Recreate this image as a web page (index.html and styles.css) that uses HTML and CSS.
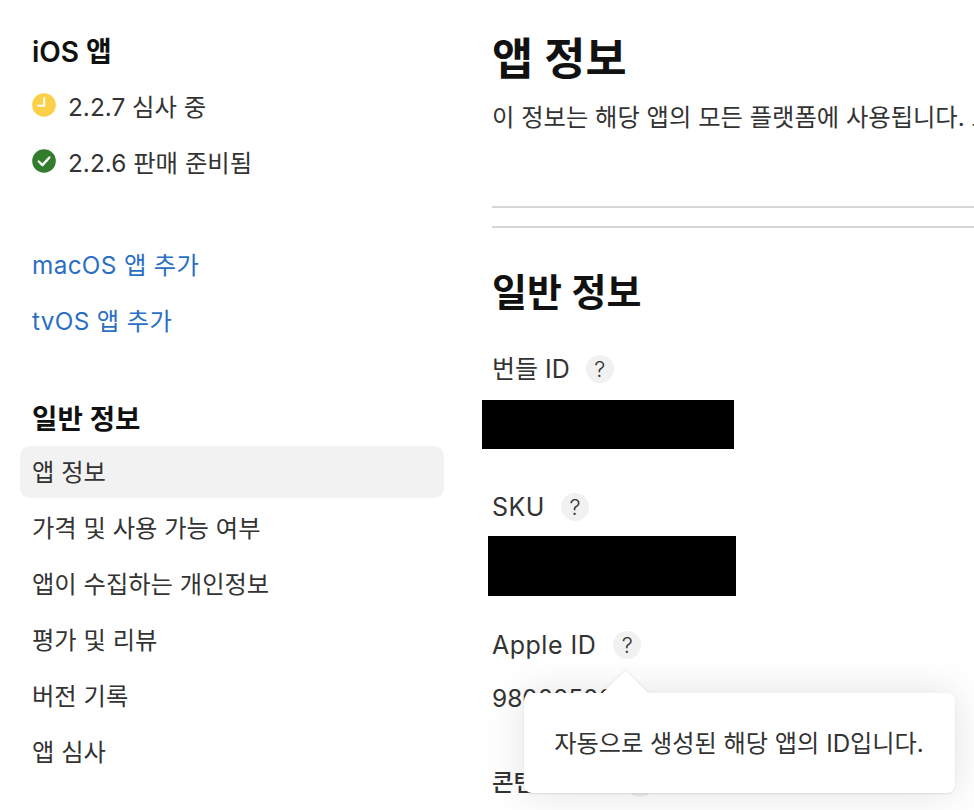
FILE: index.html
```html
<!DOCTYPE html>
<html lang="ko">
<head>
    <meta charset="UTF-8">
    <meta name="viewport" content="width=device-width, initial-scale=1.0">
    <title>앱 정보</title>
    <link rel="stylesheet" href="styles.css">
</head>
<body>

    <div class="page">
        <aside class="sidebar">
            <h3 class="side-title">iOS 앱</h3>
            <div class="status-row">
                <svg class="status-icon" viewBox="0 0 24 24" width="24" height="24">
                    <circle cx="12" cy="12" r="11.8" fill="#fbcf47"/>
                    <path d="M12.2 4.3v8.5H5.3" fill="none" stroke="#fff" stroke-width="2"/>
                </svg>
                <span>2.2.7 심사 중</span>
            </div>
            <div class="status-row">
                <svg class="status-icon" viewBox="0 0 24 24" width="24" height="24">
                    <circle cx="12" cy="12" r="11.8" fill="#317c2d"/>
                    <path d="M6.8 12.5l3.6 3.6 7-7.6" fill="none" stroke="#fff" stroke-width="2.4" stroke-linecap="round" stroke-linejoin="round"/>
                </svg>
                <span>2.2.6 판매 준비됨</span>
            </div>

            <div class="add-links">
                <a class="add-link" href="#">macOS 앱 추가</a>
                <a class="add-link" href="#">tvOS 앱 추가</a>
            </div>

            <h3 class="side-title side-title-general">일반 정보</h3>
            <nav class="side-nav">
                <a class="nav-item active" href="#">앱 정보</a>
                <a class="nav-item" href="#">가격 및 사용 가능 여부</a>
                <a class="nav-item" href="#">앱이 수집하는 개인정보</a>
                <a class="nav-item" href="#">평가 및 리뷰</a>
                <a class="nav-item" href="#">버전 기록</a>
                <a class="nav-item" href="#">앱 심사</a>
            </nav>
        </aside>

        <main class="content">
            <h1 class="page-title">앱 정보</h1>
            <p class="page-desc">이 정보는 해당 앱의 모든 플랫폼에 사용됩니다. 모든 변경 사항은 다음 앱 버전 출시에 적용됩니다.</p>
            <hr class="rule rule-first">
            <hr class="rule">

            <h2 class="section-title">일반 정보</h2>

            <div class="field-label label-bundle">번들 ID <span class="help">?</span></div>
            <div class="redact redact-bundle"></div>

            <div class="field-label label-sku">SKU <span class="help">?</span></div>
            <div class="redact redact-sku"></div>

            <div class="field-label label-apple">Apple ID <span class="help">?</span></div>
            <div class="field-value">9800250000</div>

            <div class="field-label label-rights">콘텐츠 권한 <span class="help">?</span></div>

            <div class="tooltip">
                <span class="tooltip-arrow"></span>
                자동으로 생성된 해당 앱의 ID입니다.
            </div>
        </main>
    </div>

</body>
</html>
```

FILE: styles.css
```css
html, body {
    margin: 0;
    padding: 0;
    height: 810px;
    overflow: hidden;
}

body {
    font-family: 'Inter', 'Noto Sans CJK KR', sans-serif;
    background-color: #fff;
    color: #333;
}

.page {
    display: flex;
    height: 810px;
    overflow: hidden;
}

.sidebar {
    width: 444px;
    padding: 34px 0 0 20px;
    box-sizing: border-box;
    flex-shrink: 0;
}

.side-title {
    margin: 0 0 0 12px;
    font-size: 28px;
    line-height: 36px;
    font-weight: 600;
    color: #111;
}

.status-row {
    display: flex;
    align-items: center;
    gap: 12px;
    height: 56px;
    margin-left: 12px;
    font-size: 24.4px;
    color: #333;
}

.status-row:first-of-type {
    margin-top: 7px;
}

.status-icon {
    flex-shrink: 0;
}

.add-links {
    margin-top: 48px;
    margin-left: 12px;
}

.add-link {
    display: block;
    height: 56px;
    line-height: 56px;
    font-size: 24.3px;
    letter-spacing: 0.35px;
    color: #2a6fc4;
    text-decoration: none;
}

.side-title-general {
    margin-top: 52px;
    font-size: 27.6px;
}

.side-nav {
    margin-top: 9px;
}

.nav-item {
    display: block;
    height: 52px;
    line-height: 52px;
    padding-left: 12px;
    margin-bottom: 4px;
    font-size: 24.3px;
    color: #333;
    text-decoration: none;
    border-radius: 10px;
}

.nav-item.active {
    background-color: #f2f2f2;
}

.content {
    position: relative;
    margin-left: 48px;
    padding-top: 27px;
    flex-grow: 1;
    min-width: 0;
}

.page-title {
    margin: 0;
    font-size: 44.7px;
    line-height: 64px;
    font-weight: 600;
    color: #111;
    white-space: nowrap;
}

.page-desc {
    margin: 8px 0 0 0;
    font-size: 24.3px;
    line-height: 36px;
    white-space: nowrap;
}

.rule {
    margin: 0;
    border: none;
    height: 2px;
    background-color: #d6d6d6;
}

.rule-first {
    margin-top: 71px;
    margin-bottom: 18px;
}

.section-title {
    margin: 36px 0 0 0;
    font-size: 38px;
    line-height: 56px;
    font-weight: 600;
    color: #111;
}

.field-label {
    font-size: 25px;
    line-height: 28px;
    letter-spacing: 0.5px;
    color: #333;
    display: flex;
    align-items: center;
    gap: 16px;
}

.label-bundle {
    margin-top: 35px;
    letter-spacing: 0;
}

.label-sku {
    margin-top: 44px;
}

.label-apple {
    margin-top: 35px;
    gap: 17px;
}

.label-rights {
    margin-top: 55px;
    font-size: 23.5px;
    font-weight: 500;
    letter-spacing: 0;
    gap: 20px;
}

.help {
    width: 28px;
    height: 28px;
    border-radius: 50%;
    background-color: #f1f1f1;
    font-size: 22px;
    font-weight: 300;
    letter-spacing: 0;
    text-align: center;
    line-height: 28px;
}

.redact {
    background-color: #000;
}

.redact-bundle {
    width: 252px;
    height: 49px;
    margin: 17px 0 0 -10px;
}

.redact-sku {
    width: 248px;
    height: 60px;
    margin: 15px 0 0 -4px;
}

.field-value {
    margin-top: 23px;
    font-size: 24.5px;
    line-height: 32px;
}

.tooltip {
    position: absolute;
    left: 32px;
    top: 693px;
    width: 431px;
    height: 100px;
    box-sizing: border-box;
    padding-bottom: 4px;
    padding-right: 1px;
    display: flex;
    align-items: center;
    justify-content: center;
    background-color: #fff;
    border-radius: 8px;
    box-shadow: 0 0 40px rgba(0, 0, 0, 0.12), 0 1px 2px rgba(0, 0, 0, 0.1);
    font-size: 24.2px;
    color: #333;
    white-space: nowrap;
}

.tooltip-arrow {
    position: absolute;
    left: 85px;
    top: -16.5px;
    width: 33px;
    height: 33px;
    background-color: #fff;
    transform: rotate(45deg);
    box-shadow: -1px -1px 2px rgba(0, 0, 0, 0.06);
}
```
